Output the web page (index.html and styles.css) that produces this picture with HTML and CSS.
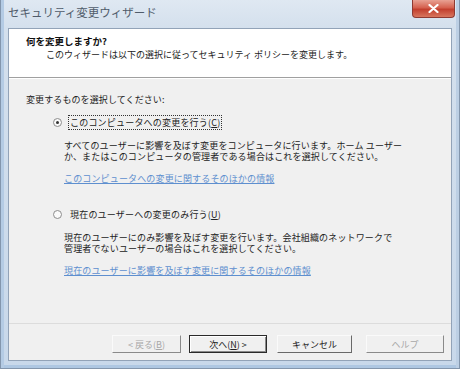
FILE: index.html
```html
<!DOCTYPE html>
<html>
<head>
    <title>セキュリティ変更ウィザード</title>
    <link rel="stylesheet" href="styles.css">
</head>
<body>
    <div class="window">
        <div class="titlebar">
            <span class="title">セキュリティ変更ウィザード</span>
            <button class="close" title="閉じる">
                <svg width="11" height="9" viewBox="0 0 11 9">
                    <path d="M1.5 1 L9.5 8 M9.5 1 L1.5 8" stroke="#fff" stroke-width="2.2" stroke-linecap="round"/>
                </svg>
            </button>
        </div>
        <div class="client">
            <div class="header">
                <div class="header-title">何を変更しますか?</div>
                <div class="header-sub">このウィザードは以下の選択に従ってセキュリティ ポリシーを変更します。</div>
            </div>
            <div class="content">
                <div class="prompt">変更するものを選択してください:</div>

                <!-- computer-wide option -->
                <div class="option">
                    <label class="choice">
                        <span class="radio checked"></span>
                        <span class="choice-text focused">このコンピュータへの変更を行う(<u>C</u>)</span>
                    </label>
                    <p class="desc">すべてのユーザーに影響を及ぼす変更をコンピュータに行います。ホーム ユーザー<br>か、またはこのコンピュータの管理者である場合はこれを選択してください。</p>
                    <a class="more" href="#">このコンピュータへの変更に関するそのほかの情報</a>
                </div>

                <!-- current user option -->
                <div class="option">
                    <label class="choice">
                        <span class="radio"></span>
                        <span class="choice-text">現在のユーザーへの変更のみ行う(<u>U</u>)</span>
                    </label>
                    <p class="desc">現在のユーザーにのみ影響を及ぼす変更を行います。会社組織のネットワークで<br>管理者でないユーザーの場合はこれを選択してください。</p>
                    <a class="more" href="#">現在のユーザーに影響を及ぼす変更に関するそのほかの情報</a>
                </div>
            </div>
            <div class="footer">
                <button class="btn back" disabled>&lt; 戻る(<u>B</u>)</button>
                <button class="btn default">次へ(<u>N</u>) &gt;</button>
                <button class="btn cancel">キャンセル</button>
                <button class="btn help" disabled>ヘルプ</button>
            </div>
        </div>
    </div>
</body>
</html>
```

FILE: styles.css
```css
body {
    margin: 0;
    font-family: "Noto Sans CJK JP", "Liberation Sans", sans-serif;
    background-color: #c9d8e8;
}

.window {
    width: 460px;
    height: 369px;
    box-sizing: border-box;
    display: flex;
    flex-direction: column;
    padding: 0 7px 7px 7px;
    border: 1px solid #8396ad;
    border-top: none;
    background: linear-gradient(to bottom, #dfe8f2 0px, #d4e0ed 28px, #c8d8ea 100%);
    box-shadow: inset 3px 0 0 #b4cbe4, inset -3px 0 0 #bccfe4, inset 0 -3px 0 #aec7e2;
}

.titlebar {
    height: 28px;
    display: flex;
    align-items: flex-start;
}

.title {
    font-size: 11.5px;
    line-height: 24px;
    color: #505c6b;
}

.close {
    margin-left: auto;
    margin-right: -3px;
    width: 43px;
    height: 18px;
    padding: 0;
    border: 1px solid #8e3a32;
    border-top: none;
    border-radius: 0 0 4px 4px;
    background: linear-gradient(to bottom, #e8a193 0%, #d5614f 45%, #c23f2e 55%, #d8765e 100%);
    display: flex;
    align-items: center;
    justify-content: center;
}

.client {
    flex: 1;
    display: flex;
    flex-direction: column;
    background-color: #f0f0f0;
    border: 1px solid #92a3b8;
}

.header {
    height: 49px;
    background-color: #fff;
    border-bottom: 1px solid #a0a0a0;
    box-shadow: 0 1px 0 #fff;
    padding: 5px 0 0 17px;
    box-sizing: border-box;
}

.header-title {
    font-size: 9.5px;
    font-weight: bold;
    line-height: 14px;
    color: #111;
}

.header-sub {
    font-size: 9px;
    line-height: 14px;
    padding-left: 20px;
    color: #222;
}

.content {
    flex: 1;
    padding: 15px 0 0 17px;
    font-size: 9px;
    color: #222;
}

.prompt {
    line-height: 14px;
    letter-spacing: 0.1px;
}

.option {
    padding-left: 26px;
    margin-top: 7px;
}

.option + .option {
    margin-top: 21px;
}

.choice {
    display: flex;
    align-items: center;
    height: 16px;
}

.radio {
    width: 7px;
    height: 7px;
    border: 1px solid #8d8d8d;
    border-radius: 50%;
    background: #fafafa;
    margin-right: 6px;
    margin-left: 1px;
    display: flex;
    align-items: center;
    justify-content: center;
}

.radio.checked::after {
    content: "";
    width: 3px;
    height: 3px;
    border-radius: 50%;
    background: #333;
}

.choice-text {
    line-height: 13px;
    padding: 0 1px;
    border: 1px solid transparent;
    letter-spacing: 0.2px;
}

.choice-text.focused {
    border: 1px dotted #333;
}

.desc {
    margin: 10px 0 0 12px;
    line-height: 11px;
    letter-spacing: 0.15px;
}

.more {
    display: block;
    margin: 11px 0 0 12px;
    line-height: 12px;
    color: #5e8fcf;
    letter-spacing: 0.15px;
}

.footer {
    height: 37px;
    border-top: 1px solid #dcdcdc;
    display: flex;
    align-items: flex-start;
    justify-content: flex-end;
    padding: 11px 7px 0 0;
    box-sizing: border-box;
}

.btn {
    font-family: "Noto Sans CJK JP", "Liberation Sans", sans-serif;
    font-size: 9px;
    height: 18px;
    width: 76px;
    padding: 0;
    background: #f0f0f0;
    color: #222;
    border: 1px solid;
    border-color: #fafafa #696969 #696969 #fafafa;
}

.back {
    width: 69px;
}

.default {
    margin-left: 8px;
    width: 78px;
    border: 1px solid #2a2a2a;
    box-shadow: inset 1px 1px 0 #fff, inset -1px -1px 0 #8a8a8a;
}

.cancel {
    margin-left: 10px;
    width: 75px;
}

.help {
    margin-left: 14px;
    width: 78px;
}

.btn[disabled] {
    color: #a8a8a8;
    border-color: #fafafa #8a8a8a #8a8a8a #fafafa;
}
```
